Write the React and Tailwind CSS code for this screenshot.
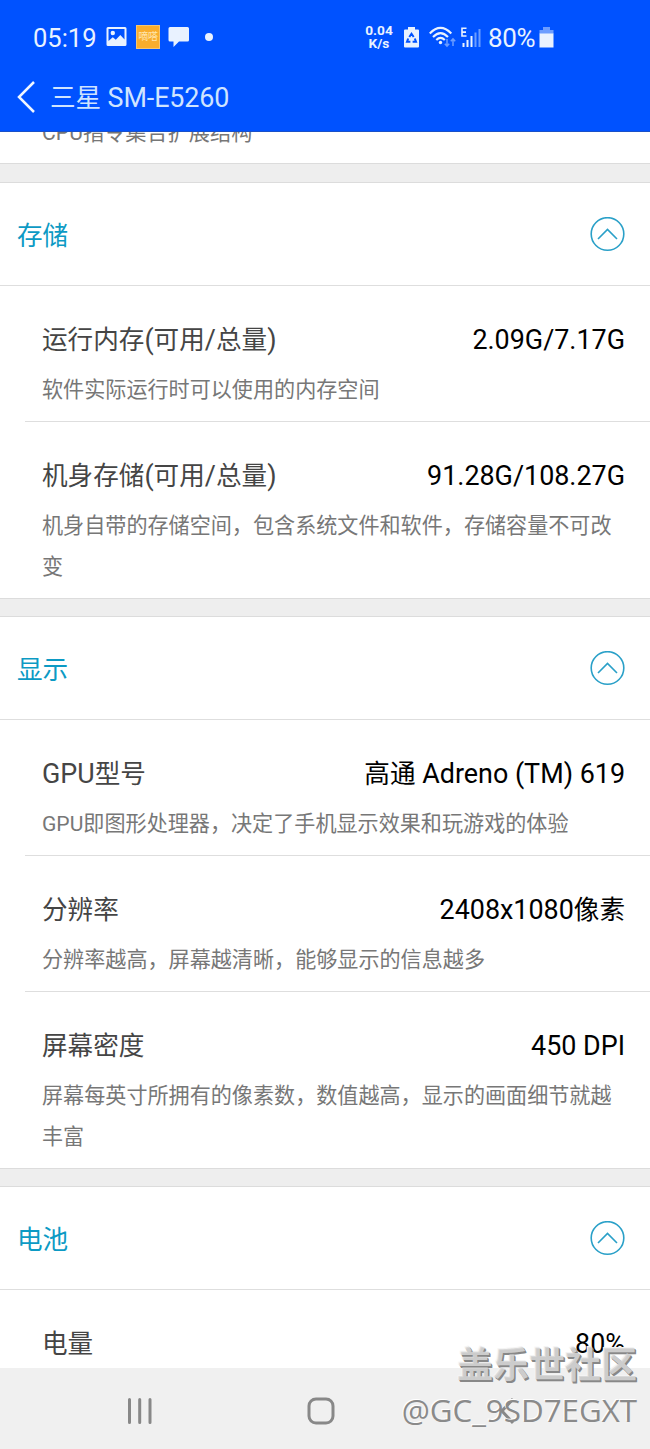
import React from "react";

const sections = [
  {
    title: "存储",
    rows: [
      { label: "运行内存(可用/总量)", value: "2.09G/7.17G", desc: "软件实际运行时可以使用的内存空间" },
      { label: "机身存储(可用/总量)", value: "91.28G/108.27G", desc: "机身自带的存储空间，包含系统文件和软件，存储容量不可改变" },
    ],
  },
  {
    title: "显示",
    rows: [
      { label: "GPU型号", value: "高通 Adreno (TM) 619", desc: "GPU即图形处理器，决定了手机显示效果和玩游戏的体验" },
      { label: "分辨率", value: "2408x1080像素", desc: "分辨率越高，屏幕越清晰，能够显示的信息越多" },
      { label: "屏幕密度", value: "450 DPI", desc: "屏幕每英寸所拥有的像素数，数值越高，显示的画面细节就越丰富" },
    ],
  },
  { title: "电池", rows: [{ label: "电量", value: "80%", desc: "" }] },
];

// Chinese runs are set slightly smaller than the Latin text beside them.
function Mixed({ text }) {
  return text.split(/([\u4e00-\u9fff]+)/).map((part, i) =>
    i % 2 ? (
      <span key={i} className="text-[25.600px]">{part}</span>
    ) : (
      part
    )
  );
}

function StatusBar() {
  return (
    <div className="flex h-[66px] items-center pt-2 pl-[33px] text-[#e9f2ff]">
      <span className="w-[73px] pt-px text-[25.500px] leading-8">05:19</span>
      <svg className="h-5 w-[21px]" viewBox="0 0 21 20">
        <path d="M2 0H19Q20.500 0 20.500 1.500V17.500Q20.500 19 19 19H2Q.5 19 .5 17.500V1.500Q.5 0 2 0ZM2.500 2V14L6.800 10.200 9.800 12.700 14.300 8 18.500 12.500V2Z" fill="#e9f2ff" fillRule="evenodd" />
        <circle cx="6.800" cy="6" r="2.200" fill="#e9f2ff" />
      </svg>
      <span className="ml-[9px] flex h-6 w-6 items-center justify-center overflow-hidden border border-[#f4c572] bg-[#f9ad2d] text-[10px] leading-none tracking-tight text-[#ffe5ae]">嘀嗒</span>
      <svg className="ml-2 h-[22px] w-[22px]" viewBox="0 0 22 22">
        <path d="M2 1H19.500Q21 1 21 2.500V14Q21 15.500 19.500 15.500H11L5.500 21V15.500H2Q.5 15.500 .5 14V2.500Q.5 1 2 1Z" fill="#e9f2ff" />
      </svg>
      <span className="ml-[15px] h-2 w-2 rounded-full bg-[#e9f2ff]" />
      <div className="ml-[152px] w-[28px] text-center text-[13.700px] leading-[13px] font-bold whitespace-nowrap">
        <div>0.04</div>
        <div>K/s</div>
      </div>
      <svg className="ml-[11px] h-[21px] w-[15px]" viewBox="0 0 15 21">
        <path d="M4 0H11V2.500H14Q15 2.500 15 3.500V19.500Q15 20.500 14 20.500H1Q0 20.500 0 19.500V3.500Q0 2.500 1 2.500H4Z" fill="#e9f2ff" />
        <path d="M5.300 10 7.500 6.800 9.700 10M10.800 11.500 12 14.800H8.600M6.400 14.800H3L4.200 11.500" fill="none" stroke="#0052ff" strokeWidth="2" />
      </svg>
      <svg className="ml-[10px] h-[22px] w-7" viewBox="0 0 28 22">
        <g fill="none" stroke="#e9f2ff" strokeWidth="2.100">
          <path d="M.8 7.500Q11.500-3.800 22.300 7.500" />
          <path d="M4 11Q11.500 3.200 19 11" />
          <path d="M7.300 14Q11.500 9.800 15.800 14" />
        </g>
        <circle cx="11.500" cy="16.500" r="1.700" fill="#e9f2ff" />
        <path d="M18 13V20M15.800 17.800 18 20.200 20.200 17.800M24 20V13M21.800 15.200 24 12.800 26.200 15.200" fill="none" stroke="#6c9dff" strokeWidth="1.500" />
      </svg>
      <svg className="ml-[3px] h-[22px] w-[22px]" viewBox="0 0 22 22">
        <path d="M6.500 2.200H2V10H6.500M2 6.100H6" fill="none" stroke="#e9f2ff" strokeWidth="1.600" />
        <path d="M3.500 17V21M7.500 14V21M11.500 10V21" stroke="#e9f2ff" strokeWidth="2" />
        <path d="M15.500 6.500V21M19.500 3V21" stroke="#6c9dff" strokeWidth="2" />
      </svg>
      <span className="ml-[6px] w-[51px] pt-px text-[26px] leading-8 tracking-[-0.300px] whitespace-nowrap">80%</span>
      <svg className="h-[21px] w-[15px]" viewBox="0 0 15 21">
        <path d="M4 0H11V3H14.500V7H.5V3H4Z" fill="#6c9dff" />
        <path d="M.5 6.500H14.500V20.500H.5Z" fill="#e9f2ff" />
      </svg>
    </div>
  );
}

function Gap({ tall }) {
  return (
    <div
      className={
        tall
          ? "h-5 shrink-0 border-y border-[#dcdcdc] bg-[#eeeeee]"
          : "h-[19px] shrink-0 border-y border-[#dcdcdc] bg-[#eeeeee]"
      }
    />
  );
}

function SectionHeader({ title }) {
  return (
    <div className="flex h-[103px] shrink-0 items-center justify-between border-b border-[#dedede] pr-[25px] pl-[17px]">
      <h2 className="pt-[3px] text-[25.600px] leading-9 text-[#0c9ac4]">{title}</h2>
      <svg className="h-[35px] w-[35px]" viewBox="0 0 35 35" fill="none" stroke="#2aa0c8" strokeWidth="1.600">
        <circle cx="17.500" cy="17" r="16.300" />
        <path d="M8 22 17.500 12.500 27 22" />
      </svg>
    </div>
  );
}

function Row({ label, value, desc, last }) {
  return (
    <div className={last ? "shrink-0" : "ml-[25px] shrink-0 border-b border-[#dedede]"}>
      <div className={last ? "pr-[25px] pl-[42px]" : "pr-[25px] pl-[17px]"}>
        <div className="flex items-center justify-between pt-9 text-[26.900px] leading-9">
          <span className="text-[#454545]"><Mixed text={label} /></span>
          <span className="text-black"><Mixed text={value} /></span>
        </div>
        <p className="pt-[11px] pb-[11px] text-[21.100px] leading-[41px] text-[#777777]">{desc}</p>
      </div>
    </div>
  );
}

export default function App() {
  return (
    <div className="relative flex h-[1449px] w-[650px] flex-col overflow-hidden bg-white font-['Roboto','Noto_Sans_CJK_SC',sans-serif]" lang="zh-CN">
      <header className="h-[132px] shrink-0 border-b border-[#1a50c8] bg-[#0052ff]">
        <StatusBar />
        <div className="flex h-[62px] items-center pl-[17px] text-[#cfe4ff]">
          <svg className="h-8 w-[18px]" viewBox="0 0 18 32">
            <path d="M17 1 2 16 17 31" fill="none" stroke="#f0f6ff" strokeWidth="2.500" />
          </svg>
          <h1 className="ml-[15px] pt-px text-[26.900px] leading-9 tracking-[-0.100px]"><Mixed text="三星 SM-E5260" /></h1>
        </div>
      </header>
      <main className="flex h-[1236px] shrink-0 flex-col overflow-hidden">
        <div className="h-[31px] shrink-0 overflow-hidden pl-[42px]">
          <p className="-mt-[20px] text-[21.200px] leading-[41px] text-[#777777]">CPU指令集合扩展结构</p>
        </div>
        {sections.map((s, n) => (
          <React.Fragment key={s.title}>
            <Gap tall={n === 0} />
            <SectionHeader title={s.title} />
            {s.rows.map((r, i) => (
              <Row key={r.label} {...r} last={i === s.rows.length - 1} />
            ))}
          </React.Fragment>
        ))}
      </main>
      <nav className="flex h-[81px] shrink-0 items-center bg-[#f0f0f0] pt-1 pl-[127px]">
        <svg className="h-[26px] w-[26px]" viewBox="0 0 26 26">
          <path d="M2.500 1.500V24.500M12.700 1.500V24.500M23 1.500V24.500" stroke="#888" strokeWidth="3" strokeLinecap="round" />
        </svg>
        <svg className="ml-[154px] h-7 w-7" viewBox="0 0 28 28">
          <rect x="2" y="2" width="24" height="24" rx="7" fill="none" stroke="#888" strokeWidth="3" />
        </svg>
        <svg className="ml-[164px] h-7 w-4" viewBox="0 0 16 28">
          <path d="M14 2 3 14 14 26" fill="none" stroke="#888" strokeWidth="3" />
        </svg>
      </nav>
      <div className="absolute right-[13px] bottom-[17px] text-right whitespace-nowrap">
        <div className="text-[36px] leading-[44px] font-bold text-[#d6d6d6e6] [text-shadow:1px_1px_0_#888,1.500px_2px_0_#888,-1px_-1px_0_#f4f4f4]">盖乐世社区</div>
        <div className="font-['Open_Sans',sans-serif] text-[31.300px] leading-[44px] text-[#8a8a8a] [text-shadow:-1px_-1px_0_#ffffff]">@GC_9SD7EGXT</div>
      </div>
    </div>
  );
}
